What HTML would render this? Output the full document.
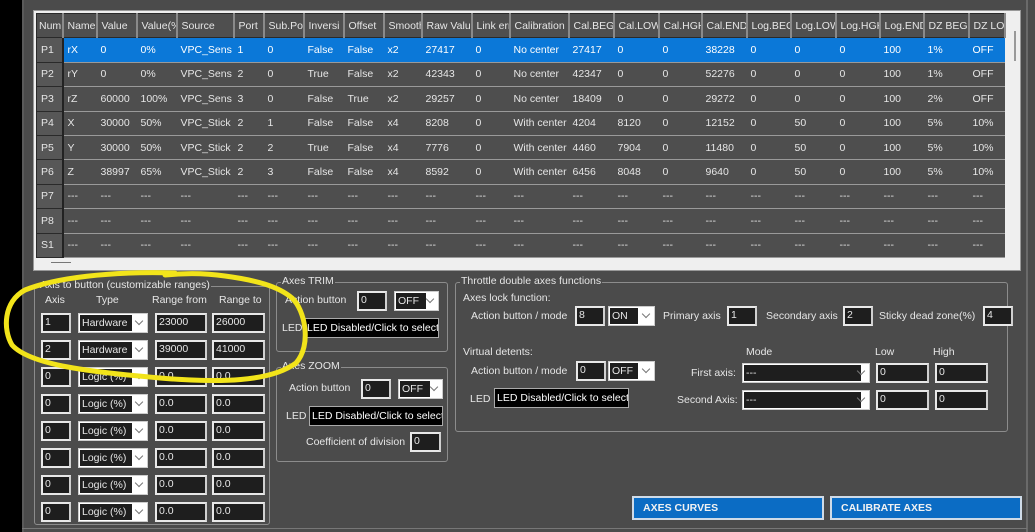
<!DOCTYPE html>
<html><head><meta charset="utf-8"><style>
*{box-sizing:border-box;margin:0;padding:0}
body{width:1035px;height:532px;overflow:hidden;background:#000;font-family:"Liberation Sans",sans-serif;font-size:10.5px;color:#e6e6e6;position:relative}
.abs{position:absolute}
#panel{left:22px;top:0;width:1013px;height:532px;background:#4b4b4b;border-left:2px solid #5a5a5a}
#tblwrap{left:33px;top:10px;width:988px;height:261px;background:#efefef;border:1px solid #999;overflow:hidden}
table{border-collapse:collapse;table-layout:fixed;position:absolute;left:2px;top:2px;width:968px}
td,th{height:24.4px;white-space:nowrap;overflow:hidden;padding-left:4px;text-align:left;font-weight:normal}
th{background:#4f4f4f;border:1px solid #2a2a2a;border-right:2px solid #8a8a8a;color:#e6e6e6}
td{background:#4e4e4e;border-bottom:1px solid #9a9a9a}
td.h{background:#575757;border:1px solid #2a2a2a;border-right:2px solid #222;padding-left:4px}
tr.sel td{background:#0b78d8;color:#fff}
tr.sel td.h{background:#575757;color:#e6e6e6}
.grp{border:1px solid #8c8c8c;border-radius:3px}
.lg{position:absolute;top:-8px;left:4px;background:#4b4b4b;padding:0 1px;color:#e6e6e6}
.in{position:absolute;height:20px;background:#1e1e1e;border:2px solid #e8e8e8;border-right-color:#d0d0d0;color:#e6e6e6;padding-left:2px;line-height:15px;overflow:hidden}
.dd{position:absolute;height:20px;background:#fff;border:1px solid #ccc}
.dd span{position:absolute;left:1px;top:1px;bottom:1px;background:#1e1e1e;color:#e6e6e6;padding-left:2px;line-height:16px;overflow:hidden;white-space:nowrap}
.dd i{position:absolute;right:5px;top:4px;width:6px;height:6px;border-right:1px solid #777;border-bottom:1px solid #777;transform:rotate(45deg)}
.led{position:absolute;height:20px;background:#000;border:1px solid #aaa;color:#fff;line-height:18px;padding-left:2px;white-space:nowrap;overflow:hidden}
.t{position:absolute;white-space:nowrap}
.btn{position:absolute;height:24px;background:#0b6cc4;border:2px solid #cfdbe8;color:#f2f2f2;font-weight:bold;line-height:20px;padding-left:9px}
</style></head><body>
<div id="panel" class="abs"></div>
<div class="abs" style="left:1026px;top:0;width:2px;height:532px;background:#6a6a6a"></div>
<div id="tblwrap" class="abs">
<table>
<colgroup><col style="width:26px"><col style="width:34px"><col style="width:40px"><col style="width:40px"><col style="width:57px"><col style="width:30px"><col style="width:40px"><col style="width:40px"><col style="width:40px"><col style="width:38px"><col style="width:50px"><col style="width:38px"><col style="width:59px"><col style="width:45px"><col style="width:45px"><col style="width:43px"><col style="width:45px"><col style="width:44px"><col style="width:45px"><col style="width:44px"><col style="width:44px"><col style="width:45px"><col style="width:36px"></colgroup>
<tr><th style="padding-left:2px">Num</th><th>Name</th><th>Value</th><th>Value(%</th><th>Source</th><th>Port</th><th>Sub.Po</th><th>Inversi</th><th>Offset</th><th>Smooth</th><th>Raw Valu</th><th>Link err</th><th>Calibration</th><th>Cal.BEG</th><th>Cal.LOW</th><th>Cal.HGH</th><th>Cal.END</th><th>Log.BEG</th><th>Log.LOW</th><th>Log.HGH</th><th>Log.END</th><th>DZ BEG</th><th>DZ LOW</th></tr>
<tr class="sel"><td class="h">P1</td><td>rX</td><td>0</td><td>0%</td><td>VPC_Sens</td><td>1</td><td>0</td><td>False</td><td>False</td><td>x2</td><td>27417</td><td>0</td><td>No center</td><td>27417</td><td>0</td><td>0</td><td>38228</td><td>0</td><td>0</td><td>0</td><td>100</td><td>1%</td><td>OFF</td></tr>
<tr><td class="h">P2</td><td>rY</td><td>0</td><td>0%</td><td>VPC_Sens</td><td>2</td><td>0</td><td>True</td><td>False</td><td>x2</td><td>42343</td><td>0</td><td>No center</td><td>42347</td><td>0</td><td>0</td><td>52276</td><td>0</td><td>0</td><td>0</td><td>100</td><td>1%</td><td>OFF</td></tr>
<tr><td class="h">P3</td><td>rZ</td><td>60000</td><td>100%</td><td>VPC_Sens</td><td>3</td><td>0</td><td>False</td><td>True</td><td>x2</td><td>29257</td><td>0</td><td>No center</td><td>18409</td><td>0</td><td>0</td><td>29272</td><td>0</td><td>0</td><td>0</td><td>100</td><td>2%</td><td>OFF</td></tr>
<tr><td class="h">P4</td><td>X</td><td>30000</td><td>50%</td><td>VPC_Stick</td><td>2</td><td>1</td><td>False</td><td>False</td><td>x4</td><td>8208</td><td>0</td><td>With center</td><td>4204</td><td>8120</td><td>0</td><td>12152</td><td>0</td><td>50</td><td>0</td><td>100</td><td>5%</td><td>10%</td></tr>
<tr><td class="h">P5</td><td>Y</td><td>30000</td><td>50%</td><td>VPC_Stick</td><td>2</td><td>2</td><td>True</td><td>False</td><td>x4</td><td>7776</td><td>0</td><td>With center</td><td>4460</td><td>7904</td><td>0</td><td>11480</td><td>0</td><td>50</td><td>0</td><td>100</td><td>5%</td><td>10%</td></tr>
<tr><td class="h">P6</td><td>Z</td><td>38997</td><td>65%</td><td>VPC_Stick</td><td>2</td><td>3</td><td>False</td><td>False</td><td>x4</td><td>8592</td><td>0</td><td>With center</td><td>6456</td><td>8048</td><td>0</td><td>9640</td><td>0</td><td>50</td><td>0</td><td>100</td><td>5%</td><td>10%</td></tr>
<tr><td class="h">P7</td><td>---</td><td>---</td><td>---</td><td>---</td><td>---</td><td>---</td><td>---</td><td>---</td><td>---</td><td>---</td><td>---</td><td>---</td><td>---</td><td>---</td><td>---</td><td>---</td><td>---</td><td>---</td><td>---</td><td>---</td><td>---</td><td>---</td></tr>
<tr><td class="h">P8</td><td>---</td><td>---</td><td>---</td><td>---</td><td>---</td><td>---</td><td>---</td><td>---</td><td>---</td><td>---</td><td>---</td><td>---</td><td>---</td><td>---</td><td>---</td><td>---</td><td>---</td><td>---</td><td>---</td><td>---</td><td>---</td><td>---</td></tr>
<tr><td class="h">S1</td><td>---</td><td>---</td><td>---</td><td>---</td><td>---</td><td>---</td><td>---</td><td>---</td><td>---</td><td>---</td><td>---</td><td>---</td><td>---</td><td>---</td><td>---</td><td>---</td><td>---</td><td>---</td><td>---</td><td>---</td><td>---</td><td>---</td></tr>
</table>
<div class="abs" style="left:17px;top:251px;width:20px;height:1px;background:#777"></div>
<div class="abs" style="left:980px;top:20px;width:2px;height:30px;background:#999"></div>
</div>

<div class="grp abs" style="left:34px;top:286px;width:236px;height:239px"><span class="lg">Axis to button (customizable ranges)</span></div>
<div class="t" style="left:45px;top:294px">Axis</div>
<div class="t" style="left:96px;top:294px">Type</div>
<div class="t" style="left:152px;top:294px">Range from</div>
<div class="t" style="left:219px;top:294px">Range to</div>

<div class="grp abs" style="left:276px;top:282px;width:172px;height:70px"><span class="lg">Axes TRIM</span></div>
<div class="t" style="left:285px;top:294px">Action button</div>
<div class="in" style="left:357px;top:291px;width:30px">0</div>
<div class="dd" style="left:394px;top:291px;width:45px"><span style="width:30px">OFF</span><i></i></div>
<div class="t" style="left:282px;top:322px">LED</div>
<div class="led" style="left:304px;top:318px;width:135px">LED Disabled/Click to select</div>

<div class="grp abs" style="left:276px;top:367px;width:172px;height:95px"><span class="lg">Axes ZOOM</span></div>
<div class="t" style="left:289px;top:382px">Action button</div>
<div class="in" style="left:361px;top:379px;width:30px">0</div>
<div class="dd" style="left:398px;top:379px;width:45px"><span style="width:30px">OFF</span><i></i></div>
<div class="t" style="left:286px;top:410px">LED</div>
<div class="led" style="left:309px;top:406px;width:134px">LED Disabled/Click to select</div>
<div class="t" style="left:306px;top:436px">Coefficient of division</div>
<div class="in" style="left:410px;top:432px;width:31px">0</div>

<div class="grp abs" style="left:455px;top:282px;width:553px;height:150px"><span class="lg">Throttle double axes functions</span></div>
<div class="t" style="left:463px;top:292px">Axes lock function:</div>
<div class="t" style="left:471px;top:310px">Action button / mode</div>
<div class="in" style="left:575px;top:306px;width:30px">8</div>
<div class="dd" style="left:608px;top:306px;width:47px"><span style="width:28px">ON</span><i></i></div>
<div class="t" style="left:663px;top:310px">Primary axis</div>
<div class="in" style="left:727px;top:306px;width:30px">1</div>
<div class="t" style="left:766px;top:310px">Secondary axis</div>
<div class="in" style="left:843px;top:306px;width:30px">2</div>
<div class="t" style="left:879px;top:310px">Sticky dead zone(%)</div>
<div class="in" style="left:983px;top:306px;width:30px">4</div>
<div class="t" style="left:463px;top:346px">Virtual detents:</div>
<div class="t" style="left:471px;top:365px">Action button / mode</div>
<div class="in" style="left:576px;top:361px;width:30px">0</div>
<div class="dd" style="left:608px;top:361px;width:47px"><span style="width:28px">OFF</span><i></i></div>
<div class="t" style="left:470px;top:393px">LED</div>
<div class="led" style="left:494px;top:388px;width:135px">LED Disabled/Click to select</div>
<div class="t" style="left:746px;top:346px">Mode</div>
<div class="t" style="left:875px;top:346px">Low</div>
<div class="t" style="left:933px;top:346px">High</div>
<div class="t" style="left:691px;top:367px">First axis:</div>
<div class="dd" style="left:742px;top:363px;width:128px"><span style="width:117px">---</span><i></i></div>
<div class="in" style="left:876px;top:363px;width:53px">0</div>
<div class="in" style="left:935px;top:363px;width:53px">0</div>
<div class="t" style="left:677px;top:394px">Second Axis:</div>
<div class="dd" style="left:742px;top:390px;width:128px"><span style="width:117px">---</span><i></i></div>
<div class="in" style="left:876px;top:390px;width:53px">0</div>
<div class="in" style="left:935px;top:390px;width:53px">0</div>

<div class="btn" style="left:632px;top:496px;width:192px">AXES CURVES</div>
<div class="btn" style="left:830px;top:496px;width:192px">CALIBRATE AXES</div>
<div class="abs" style="left:22px;top:528px;width:1005px;height:1px;background:#777"></div>

<div class="in" style="left:41px;top:313px;width:30px">1</div><div class="dd" style="left:78px;top:313px;width:70px"><span style="width:52px">Hardware</span><i></i></div><div class="in" style="left:155px;top:313px;width:52px">23000</div><div class="in" style="left:212px;top:313px;width:53px">26000</div>
<div class="in" style="left:41px;top:340px;width:30px">2</div><div class="dd" style="left:78px;top:340px;width:70px"><span style="width:52px">Hardware</span><i></i></div><div class="in" style="left:155px;top:340px;width:52px">39000</div><div class="in" style="left:212px;top:340px;width:53px">41000</div>
<div class="in" style="left:41px;top:367px;width:30px">0</div><div class="dd" style="left:78px;top:367px;width:70px"><span style="width:52px">Logic (%)</span><i></i></div><div class="in" style="left:155px;top:367px;width:52px">0.0</div><div class="in" style="left:212px;top:367px;width:53px">0.0</div>
<div class="in" style="left:41px;top:394px;width:30px">0</div><div class="dd" style="left:78px;top:394px;width:70px"><span style="width:52px">Logic (%)</span><i></i></div><div class="in" style="left:155px;top:394px;width:52px">0.0</div><div class="in" style="left:212px;top:394px;width:53px">0.0</div>
<div class="in" style="left:41px;top:421px;width:30px">0</div><div class="dd" style="left:78px;top:421px;width:70px"><span style="width:52px">Logic (%)</span><i></i></div><div class="in" style="left:155px;top:421px;width:52px">0.0</div><div class="in" style="left:212px;top:421px;width:53px">0.0</div>
<div class="in" style="left:41px;top:448px;width:30px">0</div><div class="dd" style="left:78px;top:448px;width:70px"><span style="width:52px">Logic (%)</span><i></i></div><div class="in" style="left:155px;top:448px;width:52px">0.0</div><div class="in" style="left:212px;top:448px;width:53px">0.0</div>
<div class="in" style="left:41px;top:475px;width:30px">0</div><div class="dd" style="left:78px;top:475px;width:70px"><span style="width:52px">Logic (%)</span><i></i></div><div class="in" style="left:155px;top:475px;width:52px">0.0</div><div class="in" style="left:212px;top:475px;width:53px">0.0</div>
<div class="in" style="left:41px;top:502px;width:30px">0</div><div class="dd" style="left:78px;top:502px;width:70px"><span style="width:52px">Logic (%)</span><i></i></div><div class="in" style="left:155px;top:502px;width:52px">0.0</div><div class="in" style="left:212px;top:502px;width:53px">0.0</div>

<svg class="abs" style="left:0;top:0" width="1035" height="532">
<path d="M175 273 C110 271 55 278 25 290 C3 302 3 330 12 345 C30 365 90 372 160 378 C220 383 270 382 296 363 C312 345 305 310 292 298 C278 286 255 280 225 276 C205 273 185 273 165 275" fill="none" stroke="#f2e41a" stroke-width="5" stroke-linecap="round"/>
</svg>
</body></html>
